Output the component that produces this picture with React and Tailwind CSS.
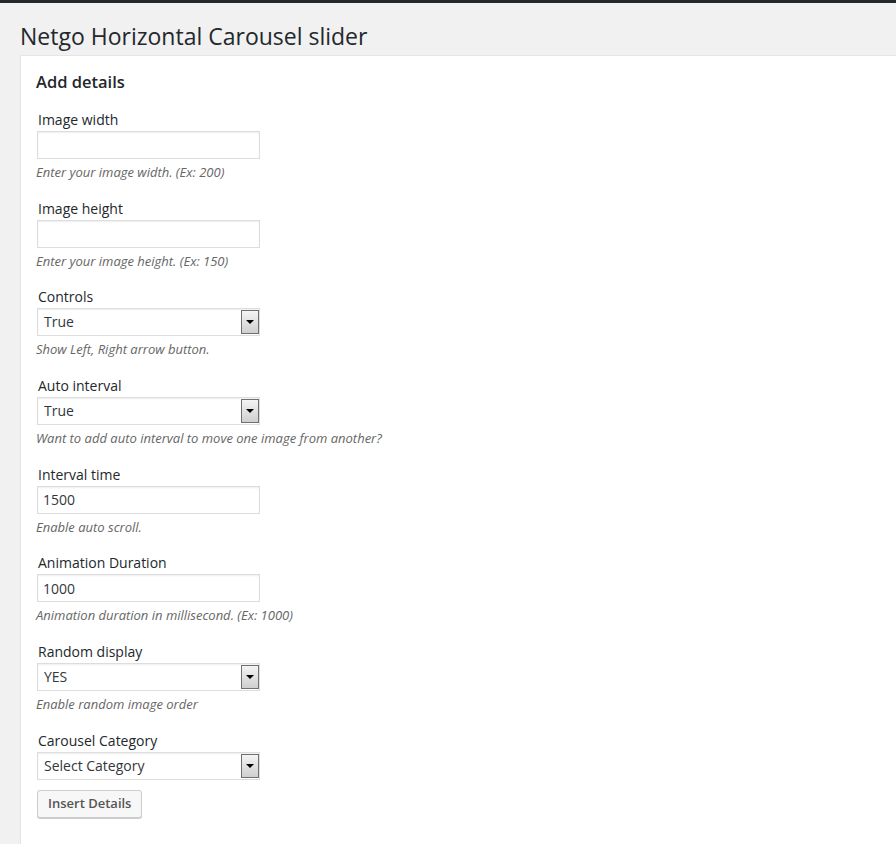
import React from 'react';

const fields = [
    { label: 'Image width', type: 'input', value: '', desc: 'Enter your image width. (Ex: 200)' },
    { label: 'Image height', type: 'input', value: '', desc: 'Enter your image height. (Ex: 150)' },
    { label: 'Controls', type: 'select', value: 'True', desc: 'Show Left, Right arrow button.' },
    { label: 'Auto interval', type: 'select', value: 'True', desc: 'Want to add auto interval to move one image from another?' },
    { label: 'Interval time', type: 'input', value: '1500', desc: 'Enable auto scroll.' },
    { label: 'Animation Duration', type: 'input', value: '1000', desc: 'Animation duration in millisecond. (Ex: 1000)' },
    { label: 'Random display', type: 'select', value: 'YES', desc: 'Enable random image order' },
    { label: 'Carousel Category', type: 'select', value: 'Select Category', desc: null },
];

const SelectBox = ({ value }) => (
    <div className="relative w-[223px] h-[28px] border border-[#dddddd] bg-white shadow-[inset_0_1px_2px_rgba(0,0,0,0.07)]">
        <select
            defaultValue={value}
            className="appearance-none w-full h-full pl-[6px] pr-[20px] bg-transparent text-[14px] leading-[26px] text-[#32373c] outline-none"
        >
            <option>{value}</option>
        </select>
        {/* old style dropdown arrow button */}
        <div className="absolute right-[0px] top-[1px] w-[18px] h-[24px] border border-[#707070] bg-gradient-to-b from-[#f4f4f4] to-[#cfcfcf] flex items-center justify-center pointer-events-none">
            <div className="w-0 h-0 border-l-[4px] border-r-[4px] border-t-[4px] border-l-transparent border-r-transparent border-t-black" />
        </div>
    </div>
);

const Field = ({ field, last }) => (
    <div className={last ? '' : 'mb-[15.7px]'}>
        <label className="block pt-[2px] text-[14px] leading-[20px] text-[#23282d] pl-[1px]">{field.label}</label>
        <div className="mt-[1px]">
            {field.type === 'input' ? (
                <input
                    type="text"
                    defaultValue={field.value}
                    className="block w-[223px] h-[28px] border border-[#dddddd] bg-white px-[5px] text-[14px] text-[#32373c] outline-none shadow-[inset_0_1px_2px_rgba(0,0,0,0.07)]"
                />
            ) : (
                <SelectBox value={field.value} />
            )}
        </div>
        {field.desc && (
            <p className="mt-[4px] text-[13px] leading-[18px] italic text-[#666666] -ml-[1px]">{field.desc}</p>
        )}
    </div>
);

export default function App() {
    return (
        <div className="min-h-screen bg-[#f1f1f1] flex flex-col" style={{ fontFamily: '"Open Sans", sans-serif' }}>
            <div className="h-[3px] bg-[#23282d]" />

            <h2 className="mt-[19px] mb-[4px] pl-[20px] text-[23px] leading-[29px] font-normal text-[#23282d]">
                Netgo Horizontal Carousel slider
            </h2>

            <div className="flex-1 ml-[20px] bg-white border-t border-l border-[#e5e5e5] shadow-[0_1px_1px_rgba(0,0,0,0.04)] pl-[16px] pt-[16px] pb-[24px]">
                <h3 className="text-[16.5px] leading-[20px] font-semibold text-[#23282d] -ml-[1px] mb-[16px]">Add details</h3>

                {fields.map((f, i) => (
                    <Field key={f.label} field={f} last={i === fields.length - 1} />
                ))}

                <button className="mt-[10px] h-[28px] px-[10px] rounded-[3px] border border-[#cccccc] bg-[#f7f7f7] shadow-[0_1px_0_#cccccc] text-[13px] font-semibold text-[#555555]">
                    Insert Details
                </button>
            </div>
        </div>
    );
}
